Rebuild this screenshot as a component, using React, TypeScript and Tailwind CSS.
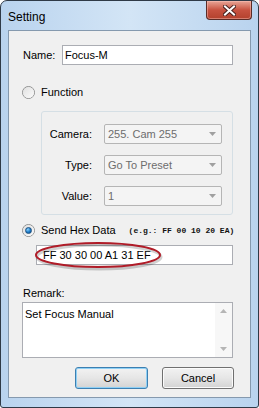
import { useState } from "react";

const SANS = "font-['Liberation_Sans',Arial,sans-serif]";

function Radio({ checked }: { checked?: boolean }) {
  return (
    <div className="w-[13px] h-[13px] rounded-full border border-[#8e8f8f] bg-gradient-to-br from-[#cfcfcf] to-[#f6f6f6] flex items-center justify-center">
      <div className="w-[11px] h-[11px] rounded-full bg-gradient-to-br from-[#e0e0e0] to-[#fbfbfb] flex items-center justify-center">
        {checked && (
          <div className="w-[7px] h-[7px] rounded-full bg-[radial-gradient(circle_at_35%_30%,#8ad3ff,#1a79c6_55%,#0d4d8a)] border border-[#1b4f80]" />
        )}
      </div>
    </div>
  );
}

function Combo({ label, value }: { label: string; value: string }) {
  return (
    <div className="flex items-center h-[20px]">
      <span className="w-[50px] text-right text-[11px] text-black">{label}</span>
      <div className="ml-[12px] w-[118px] h-[20px] rounded-[2px] border border-[#b5b5b5] bg-[#f4f4f4] flex items-center pl-[3px] pr-[5px]">
        <span className="flex-1 text-[11px] text-[#6d6d6d]">{value}</span>
        <svg width="7" height="4" viewBox="0 0 7 4">
          <path d="M0 0 H7 L3.5 4 Z" fill="#a0a0a0" />
        </svg>
      </div>
    </div>
  );
}

function Button({ children, primary }: { children: string; primary?: boolean }) {
  return (
    <button
      className={`h-[22px] rounded-[3px] text-[11px] text-black bg-gradient-to-b from-[#f2f2f2] via-[#e6e6e6] to-[#d3d3d3] ${
        primary ? "w-[73px] border border-[#3c7fb1] shadow-[inset_0_0_0_1px_#8fd0f5]" : "w-[72px] border border-[#707070] shadow-[inset_0_0_0_1px_#fbfbfb]"
      }`}
    >
      {children}
    </button>
  );
}

export default function App() {
  const [name] = useState("Focus-M");
  const [hex] = useState("FF 30 30 00 A1 31 EF");

  return (
    <div className={`${SANS} w-[259px] h-[408px] overflow-hidden`}>
      <div className="w-[259px] h-[408px] rounded-t-[7px] rounded-b-[3px] border border-[#2f3a47] bg-gradient-to-r from-[#b9d3ee] via-[#d3e5f6] to-[#b9d3ee] flex flex-col">
        {/* title bar */}
        <div className="h-[29px] flex items-start justify-between">
          <span className="ml-[7px] mt-[7px] text-[12px] text-black">Setting</span>
          <div className="mr-[6px] w-[46px] h-[19px] rounded-b-[4px] border border-t-0 border-[#5a2c27] bg-gradient-to-b from-[#e7a597] via-[#c75240] to-[#b3412d] flex items-center justify-center shadow-[inset_0_0_0_1px_rgba(255,200,190,0.45)]">
            <svg width="13" height="11" viewBox="0 0 13 11">
              <path d="M2 1.5 L11 9.5 M11 1.5 L2 9.5" stroke="#4b2320" strokeWidth="4" strokeLinecap="square" />
              <path d="M2 1.5 L11 9.5 M11 1.5 L2 9.5" stroke="#ffffff" strokeWidth="2" strokeLinecap="square" />
            </svg>
          </div>
        </div>

        {/* client area */}
        <div className="mx-[7px] h-[368px] border border-[#8599ae] bg-[#f0f0f0] flex flex-col">
          {/* Name */}
          <div className="mt-[14px] ml-[14px] flex items-center h-[20px]">
            <span className="w-[39px] text-[11px] text-black">Name:</span>
            <div className="w-[171px] h-[20px] border border-[#abadb3] bg-white flex items-center pl-[2px] text-[11px] text-black">
              {name}
            </div>
          </div>

          {/* Function */}
          <div className="mt-[21px] ml-[13px] flex items-center h-[13px]">
            <Radio />
            <span className="ml-[6px] text-[11px] text-black">Function</span>
          </div>

          {/* Group */}
          <div className="mt-[12px] ml-[32px] w-[192px] h-[104px] rounded-[3px] border border-[#d5dfe5] flex flex-col gap-[11px] pt-[12px]">
            <Combo label="Camera:" value="255. Cam 255" />
            <Combo label="Type:" value="Go To Preset" />
            <Combo label="Value:" value="1" />
          </div>

          {/* Send hex */}
          <div className="mt-[9px] ml-[13px] flex items-center h-[13px]">
            <Radio checked />
            <span className="ml-[6px] text-[11px] text-black">Send Hex Data</span>
            <span className="ml-[13px] text-[8px] font-bold text-[#111] whitespace-pre font-['Liberation_Mono',monospace]">
              (e.g.: FF 00 10 20 EA)
            </span>
          </div>

          <div className="relative mt-[8px] ml-[27px] w-[197px] h-[20px]">
            <div className="w-[197px] h-[20px] border border-[#abadb3] bg-white flex items-center pl-[6px] text-[11px] text-black">
              {hex}
            </div>
            <svg className="absolute left-[-2px] top-[-4px]" width="132" height="30" viewBox="0 0 132 30">
              <ellipse cx="65" cy="16" rx="62" ry="12" fill="none" stroke="rgba(0,0,0,0.18)" strokeWidth="3" />
              <ellipse cx="64" cy="14" rx="62" ry="12" fill="none" stroke="#b01c28" strokeWidth="2" />
            </svg>
          </div>

          {/* Remark */}
          <div className="mt-[22px] ml-[14px] h-[13px] flex items-center text-[11px] text-black">Remark:</div>
          <div className="mt-[2px] ml-[13px] w-[211px] h-[56px] border border-[#abadb3] bg-white flex">
            <div className="flex-1 pl-[2px] pt-[3px] text-[11px] text-black">Set Focus Manual</div>
            <div className="w-[17px] bg-[#f7f7f7] flex flex-col items-center justify-between py-[6px]">
              <svg width="7" height="4" viewBox="0 0 7 4">
                <path d="M0 4 H7 L3.5 0 Z" fill="#b5b5b5" />
              </svg>
              <svg width="7" height="4" viewBox="0 0 7 4">
                <path d="M0 0 H7 L3.5 4 Z" fill="#b5b5b5" />
              </svg>
            </div>
          </div>

          {/* Buttons */}
          <div className="mt-[9px] mr-[16px] flex justify-end gap-[14px]">
            <Button primary>OK</Button>
            <Button>Cancel</Button>
          </div>
        </div>
      </div>
    </div>
  );
}
